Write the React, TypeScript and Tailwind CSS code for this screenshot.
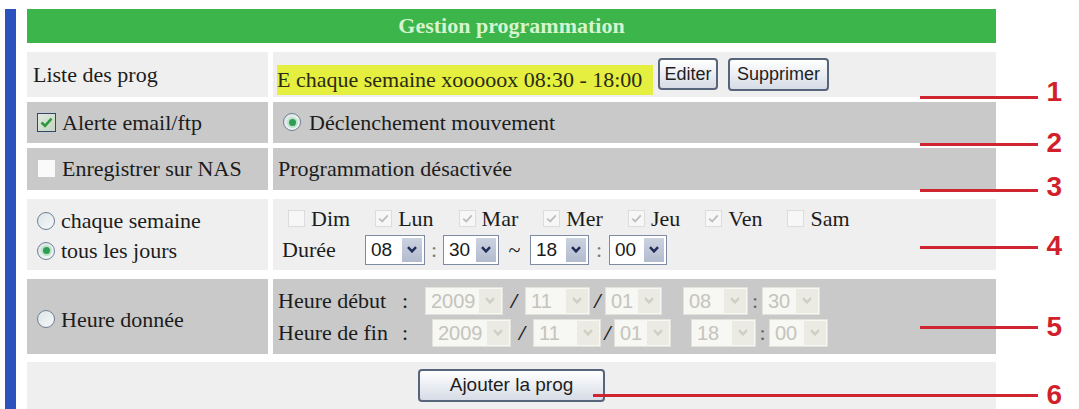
import React from 'react';

const serif = "font-['Liberation_Serif','Times_New_Roman',serif]";
const sans = "font-['Liberation_Sans',Arial,sans-serif]";

const Chevron = ({ color }: { color: string }) => (
  <svg width="10" height="7" viewBox="0 0 10 7">
    <path d="M1 1.2 L5 5.4 L9 1.2" fill="none" stroke={color} strokeWidth="2.4" />
  </svg>
);

// liste déroulante active (Durée)
const Sel = ({ value, w }: { value: string; w: string }) => (
  <span className={`inline-flex h-[30px] items-stretch border border-[#7d8ca3] bg-white shrink-0 ${w}`}>
    <span className={`flex-1 flex items-center pl-[5px] text-[19px] text-[#1a1a1a] ${sans}`}>{value}</span>
    <span className="w-[20px] my-[2px] mr-[2px] flex items-center justify-center bg-linear-to-b from-[#cbd2e0] to-[#b3bccf]">
      <Chevron color="#1f2b57" />
    </span>
  </span>
);

// liste déroulante désactivée (Heure donnée)
const SelOff = ({ value, w }: { value: string; w: string }) => (
  <span className={`inline-flex h-[28px] items-stretch border border-[#e2e2da] bg-[#f7f7f3] shrink-0 ${w}`}>
    <span className={`flex-1 flex items-center pl-[5px] text-[20px] text-[#c4c4bd] ${sans}`}>{value}</span>
    <span className="w-[22px] m-[1px] flex items-center justify-center bg-[#ebebe3]">
      <Chevron color="#cfcfc6" />
    </span>
  </span>
);

const Radio = ({ on }: { on?: boolean }) => (
  <span className="inline-flex w-[18px] h-[18px] rounded-full border-[1.5px] border-[#6e8193] bg-linear-to-br from-[#dde5e8] to-[#f6f8f8] items-center justify-center shrink-0">
    {on && <span className="w-[7px] h-[7px] rounded-full bg-[#2f9d55] ring-2 ring-[#bde3c8]" />}
  </span>
);

const Day = ({ label, on }: { label: string; on?: boolean }) => (
  <span className="flex items-center mr-[25px]">
    <span className="w-[17px] h-[17px] border border-[#dcdcdc] bg-[#f7f7f7] flex items-center justify-center shrink-0">
      {on && (
        <svg width="11" height="9" viewBox="0 0 11 9">
          <path d="M1.2 4.6 L4.2 7.4 L9.8 1.4" stroke="#bdbdbd" strokeWidth="1.8" fill="none" />
        </svg>
      )}
    </span>
    <span className="ml-[6px]">{label}</span>
  </span>
);

const Btn = ({ children, w, h }: { children: React.ReactNode; w: string; h: string }) => (
  <button
    className={`${w} ${h} shrink-0 rounded-[4px] border-2 border-[#56657c] bg-linear-to-b from-[#ffffff] to-[#d6dce6] text-[#1e1e1e] ${sans} flex items-center justify-center`}
  >
    {children}
  </button>
);

export default function App() {
  return (
    <div className={`relative w-[1079px] h-[409px] overflow-hidden bg-white flex pt-[9px] ${serif} text-[22px] text-[#1c1c1c]`}>
      <div className="ml-[5px] w-[11px] bg-[#2b52bd] -mb-[2px]" />

      <div className="ml-[11px] w-[969px] flex flex-col">
        {/* en-tête */}
        <div className="h-[34px] bg-[#3cb54a] flex items-center justify-center font-bold text-[#d6f4cf]">
          Gestion programmation
        </div>

        {/* 1 : liste */}
        <div className="mt-[9px] h-[45px] flex gap-[5px]">
          <div className="w-[241px] bg-[#efefef] flex items-center pl-[6px]">Liste des prog</div>
          <div className="flex-1 bg-[#efefef] flex items-center pl-[4px]">
            <span className="mt-[11px] w-[376px] h-[30px] bg-[#e5ef3f] flex items-center text-[#2a2a16]">
              E chaque semaine xooooox 08:30 - 18:00
            </span>
            <span className="ml-[5px]">
              <Btn w="w-[60px]" h="h-[32px]">
                <span className="text-[18px]">Editer</span>
              </Btn>
            </span>
            <span className="ml-[10px]">
              <Btn w="w-[101px]" h="h-[33px]">
                <span className="text-[18px]">Supprimer</span>
              </Btn>
            </span>
          </div>
        </div>

        {/* 2 : alerte */}
        <div className="mt-[5px] h-[41px] flex gap-[5px]">
          <div className="w-[241px] bg-[#c9c9c9] flex items-center pl-[10px]">
            <span className="w-[19px] h-[19px] border-[1.5px] border-[#33466e] bg-linear-to-br from-[#e2e8e0] to-[#c4d6c1] flex items-center justify-center shrink-0">
              <svg width="13" height="11" viewBox="0 0 13 11">
                <path d="M1.5 5.5 L5 8.8 L11.5 1.6" stroke="#2e9a3e" strokeWidth="2.6" fill="none" />
              </svg>
            </span>
            <span className="ml-[6px]">Alerte email/ftp</span>
          </div>
          <div className="flex-1 bg-[#c9c9c9] flex items-center pl-[10px]">
            <Radio on />
            <span className="ml-[8px]">Déclenchement mouvement</span>
          </div>
        </div>

        {/* 3 : NAS */}
        <div className="mt-[5px] h-[42px] flex gap-[5px]">
          <div className="w-[241px] bg-[#c9c9c9] flex items-center pl-[11px]">
            <span className="w-[17px] h-[17px] bg-[#fafafa] shrink-0" />
            <span className="ml-[7px]">Enregistrer sur NAS</span>
          </div>
          <div className="flex-1 bg-[#c9c9c9] flex items-center pl-[5px]">Programmation désactivée</div>
        </div>

        {/* 4 : récurrence */}
        <div className="mt-[9px] h-[72px] flex gap-[5px]">
          <div className="w-[241px] bg-[#efefef] flex flex-col justify-center pl-[10px] pt-[3px]">
            <div className="h-[30px] flex items-center">
              <Radio />
              <span className="ml-[6px]">chaque semaine</span>
            </div>
            <div className="h-[30px] flex items-center">
              <Radio on />
              <span className="ml-[6px]">tous les jours</span>
            </div>
          </div>
          <div className="flex-1 bg-[#efefef] flex flex-col justify-center pl-[9px]">
            <div className="h-[31px] flex items-center pl-[6px]">
              <Day label="Dim" />
              <Day label="Lun" on />
              <Day label="Mar" on />
              <Day label="Mer" on />
              <Day label="Jeu" on />
              <Day label="Ven" on />
              <Day label="Sam" />
            </div>
            <div className="h-[31px] flex items-center">
              <span className="w-[83px]">Durée</span>
              <Sel value="08" w="w-[60px]" />
              <span className="w-[18px] text-center text-[#7a7a7a]">:</span>
              <Sel value="30" w="w-[56px]" />
              <span className="w-[31px] text-center">~</span>
              <Sel value="18" w="w-[59px]" />
              <span className="w-[20px] text-center text-[#7a7a7a]">:</span>
              <Sel value="00" w="w-[58px]" />
            </div>
          </div>
        </div>

        {/* 5 : heure donnée */}
        <div className="mt-[9px] h-[75px] flex gap-[5px]">
          <div className="w-[241px] bg-[#c9c9c9] flex items-center pl-[10px] pt-[5px]">
            <Radio />
            <span className="ml-[6px]">Heure donnée</span>
          </div>
          <div className="flex-1 bg-[#c9c9c9] flex flex-col justify-center pl-[5px]">
            <div className="h-[32px] flex items-center">
              <span className="w-[124px]">Heure début</span>
              <span className="w-[6px]">:</span>
              <span className="w-[17px]" />
              <SelOff value="2009" w="w-[78px]" />
              <span className="w-[22px] text-center font-bold italic">/</span>
              <SelOff value="11" w="w-[65px]" />
              <span className="w-[15px] text-center font-bold italic">/</span>
              <SelOff value="01" w="w-[57px]" />
              <span className="w-[21px]" />
              <SelOff value="08" w="w-[65px]" />
              <span className="w-[14px] text-center text-[#666]">:</span>
              <SelOff value="30" w="w-[58px]" />
            </div>
            <div className="h-[32px] flex items-center">
              <span className="w-[124px]">Heure de fin</span>
              <span className="w-[6px]">:</span>
              <span className="w-[24px]" />
              <SelOff value="2009" w="w-[79px]" />
              <span className="w-[22px] text-center font-bold italic">/</span>
              <SelOff value="11" w="w-[68px]" />
              <span className="w-[13px] text-center font-bold italic">/</span>
              <SelOff value="01" w="w-[57px]" />
              <span className="w-[20px]" />
              <SelOff value="18" w="w-[65px]" />
              <span className="w-[13px] text-center text-[#666]">:</span>
              <SelOff value="00" w="w-[59px]" />
            </div>
          </div>
        </div>

        {/* 6 : ajout */}
        <div className="mt-[8px] h-[47px] bg-[#efefef] flex items-center justify-center">
          <Btn w="w-[187px]" h="h-[33px]">
            <span className="text-[19px]">Ajouter la prog</span>
          </Btn>
        </div>
      </div>

      {/* repères numérotés */}
      <div className="absolute left-[920px] top-[96px] w-[118px] h-[3px] bg-[#cf2530]" />
      <div className="absolute left-[920px] top-[143px] w-[118px] h-[3px] bg-[#cf2530]" />
      <div className="absolute left-[920px] top-[189px] w-[118px] h-[3px] bg-[#cf2530]" />
      <div className="absolute left-[920px] top-[246px] w-[118px] h-[3px] bg-[#cf2530]" />
      <div className="absolute left-[920px] top-[326px] w-[118px] h-[3px] bg-[#cf2530]" />
      <div className="absolute left-[593px] top-[394px] w-[445px] h-[3px] bg-[#cf2530]" />

      <span className={`absolute left-[1038px] top-[76px] w-[24px] h-[32px] leading-[32px] text-right text-[28px] font-bold text-[#d21f2c] ${sans}`}>1</span>
      <span className={`absolute left-[1038px] top-[127px] w-[24px] h-[32px] leading-[32px] text-right text-[28px] font-bold text-[#d21f2c] ${sans}`}>2</span>
      <span className={`absolute left-[1038px] top-[171px] w-[24px] h-[32px] leading-[32px] text-right text-[28px] font-bold text-[#d21f2c] ${sans}`}>3</span>
      <span className={`absolute left-[1038px] top-[230px] w-[24px] h-[32px] leading-[32px] text-right text-[28px] font-bold text-[#d21f2c] ${sans}`}>4</span>
      <span className={`absolute left-[1038px] top-[311px] w-[24px] h-[32px] leading-[32px] text-right text-[28px] font-bold text-[#d21f2c] ${sans}`}>5</span>
      <span className={`absolute left-[1038px] top-[379px] w-[24px] h-[32px] leading-[32px] text-right text-[28px] font-bold text-[#d21f2c] ${sans}`}>6</span>
    </div>
  );
}
